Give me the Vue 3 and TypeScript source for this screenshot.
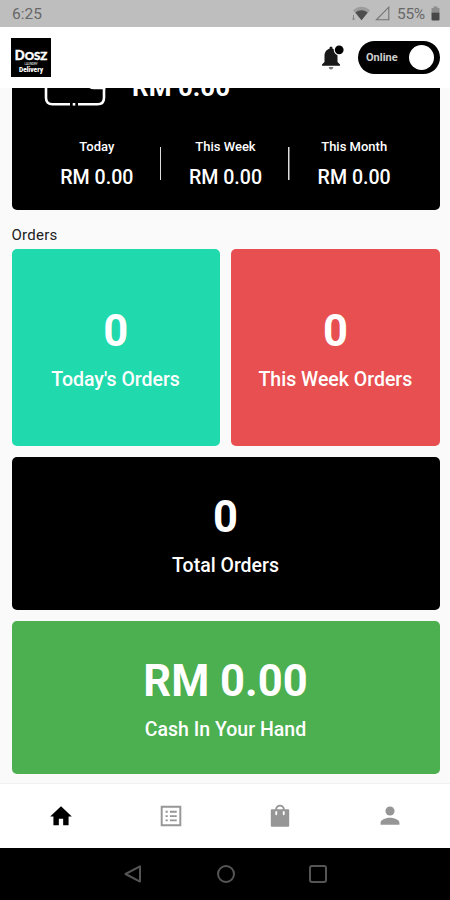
<script setup lang="ts">
interface Period {
  label: string
  amount: string
}

interface OrderCard {
  label: string
  value: string
  tone: string
}

const periods: Period[] = [
  { label: 'Today', amount: 'RM 0.00' },
  { label: 'This Week', amount: 'RM 0.00' },
  { label: 'This Month', amount: 'RM 0.00' },
]

const cards: OrderCard[] = [
  { label: "Today's Orders", value: '0', tone: 'teal' },
  { label: 'This Week Orders', value: '0', tone: 'red' },
  { label: 'Total Orders', value: '0', tone: 'black' },
  { label: 'Cash In Your Hand', value: 'RM 0.00', tone: 'green' },
]
</script>

<template>
  <div class="screen">
    <div class="status">
      <span class="clock">6:25</span>
      <svg class="wifi" width="19" height="15" viewBox="0 0 19 15">
        <path d="M1 4.2Q9.5-2.6 18 4.2L9.5 14.2Z" fill="#9c9c9c" />
        <path d="M3.3 6.6Q9.5 2 15.7 6.6L9.5 14.2Z" fill="#4d4d4d" />
        <path d="M1.5 9v5M.3 12.500l1.200 1.500 1.200-1.500" stroke="#858585" stroke-width="1" fill="none" />
      </svg>
      <svg class="signal" width="15" height="15" viewBox="0 0 15 15">
        <path d="M1.4 13.8H13.8V1.2Z" fill="none" stroke="#747474" stroke-width="1.1" />
      </svg>
      <span class="percent">55%</span>
      <svg class="battery" width="9" height="15" viewBox="0 0 9 15">
        <path d="M2.5 0.5h4v1.5H8.5V6.5H.5V2h2z" fill="#8d8d8d" />
        <path d="M.5 6.5h8v7q0 1-1 1h-6q-1 0-1-1z" fill="#484848" />
      </svg>
    </div>

    <header class="header">
      <div class="logo">
        <span class="logo-name"><b>D</b>OSZ</span>
        <span class="logo-mid">LAUNDRY</span>
        <span class="logo-sub">Delivery</span>
      </div>
      <svg class="bell" width="24" height="26" viewBox="0 0 24 26">
        <path
          d="M1 20.7v-1.2l2.5-2.6V11c0-3.8 2-6.5 5-7.2V3q0-1.6 1.5-1.6T11.500 3v.8c3 .7 5 3.400 5 7.200v5.900l2.500 2.600v1.200z"
          fill="#191919"
        />
        <path d="M7.700 22h4.600q-.4 2.500-2.300 2.500T7.700 22z" fill="#777" />
        <circle cx="18.200" cy="4.800" r="5.500" fill="#fff" />
        <circle cx="18.200" cy="4.800" r="4.400" fill="#000" />
      </svg>
      <div class="toggle">
        <span>Online</span>
        <i class="knob"></i>
      </div>
    </header>

    <main class="content">
      <section class="earnings">
        <div class="balance">
          <svg class="wallet" width="64" height="58" viewBox="0 0 64 58">
            <g fill="none" stroke="#fff" stroke-width="2.600">
              <path d="M27 54.300H9.500Q3 54.300 3 47.800V10Q3 3.500 9.500 3.500H53Q61 3.500 61 11V21" />
              <path d="M35 54.300H54.500Q61 54.300 61 47.800V38" />
              <path d="M62.300 38H51a8 8 0 0 1 0-16h11.300" />
              <path d="M29.700 54.300h2.600" />
            </g>
          </svg>
          <span class="balance-amount">RM 0.00</span>
        </div>
        <div class="periods">
          <div v-for="p in periods" :key="p.label" class="period">
            <span class="period-label">{{ p.label }}</span>
            <span class="period-amount">{{ p.amount }}</span>
          </div>
        </div>
      </section>

      <h2 class="title">Orders</h2>

      <section class="grid">
        <article v-for="c in cards" :key="c.label" class="card" :class="c.tone">
          <strong>{{ c.value }}</strong>
          <span>{{ c.label }}</span>
        </article>
      </section>
    </main>

    <nav class="tabs">
      <span class="tab active">
        <svg width="26" height="26" viewBox="0 0 24 24">
          <path d="M10 20.500v-6h4v6h5v-8h3L12 3 2 12.500h3v8z" fill="currentColor" />
        </svg>
      </span>
      <span class="tab">
        <svg width="26" height="26" viewBox="0 0 24 24">
          <path
            d="M2.500 2.500h19v19h-19zM4.300 4.300v15.400h15.400V4.300zM7 7.200h2v1.700H7zM11 7.200h6.300v1.700H11zM7 11.200h2v1.700H7zM11 11.200h6.300v1.700H11zM7 15.200h2v1.700H7zM11 15.200h6.300v1.700H11z"
            fill="currentColor"
            fill-rule="evenodd"
          />
        </svg>
      </span>
      <span class="tab">
        <svg width="26" height="26" viewBox="0 0 24 24">
          <path
            d="M19.500 5.800h-3C16.200 3.300 14.500 1.600 12 1.600S7.800 3.300 7.500 5.800h-3Q3.500 5.800 3.500 6.800V21Q3.500 22 4.500 22h15q1 0 1-1V6.800q0-1-1-1zM12 3.200q2.300 0 2.700 2.600H9.300Q9.700 3.200 12 3.200zM7.700 7.500h1.700v2.800q0 .9-.85.9t-.85-.9zM14.600 7.500h1.700v2.800q0 .9-.85.9t-.85-.9z"
            fill="currentColor"
            fill-rule="evenodd"
          />
        </svg>
      </span>
      <span class="tab">
        <svg width="26" height="26" viewBox="0 0 24 24">
          <circle cx="12" cy="7.400" r="4.200" fill="currentColor" />
          <path d="M3.300 20v-1.800c0-3 5.600-4.600 8.700-4.600s8.700 1.600 8.700 4.600V20z" fill="currentColor" />
        </svg>
      </span>
    </nav>

    <footer class="system">
      <svg width="20" height="20" viewBox="0 0 20 20">
        <path d="M17 2.400V17.600L2.500 10Z" />
      </svg>
      <svg width="20" height="20" viewBox="0 0 20 20">
        <circle cx="10" cy="10" r="8" />
      </svg>
      <svg width="20" height="20" viewBox="0 0 20 20">
        <rect x="2" y="2" width="16" height="16" rx="2" />
      </svg>
    </footer>
  </div>
</template>

<style>
body {
  margin: 0;
}
</style>

<style scoped>
.screen {
  display: flex;
  flex-direction: column;
  width: 450px;
  height: 900px;
  overflow: hidden;
  background: #fafafa;
  font-family: Roboto, "Liberation Sans", sans-serif;
}
.status {
  display: flex;
  align-items: center;
  flex: none;
  height: 27px;
  padding: 0 10px 0 12px;
  box-sizing: border-box;
  background: #bebebe;
  color: #676767;
  font-size: 15.500px;
}
.clock {
  flex: 1;
}
.wifi {
  margin-right: 4px;
}
.signal {
  margin-right: 7px;
}
.percent {
  width: 28px;
  margin-right: 6px;
  font-size: 15.500px;
  letter-spacing: -0.3px;
}
.header {
  display: flex;
  align-items: center;
  flex: none;
  height: 61px;
  padding: 0 10px 0 11px;
  background: #fff;
}
.logo {
  display: flex;
  flex-direction: column;
  align-items: center;
  width: 40px;
  height: 39px;
  margin-right: auto;
  background: #000;
  color: #fff;
}
.logo-name {
  margin-top: 11px;
  font: 900 11.500px/13px Lato, sans-serif;
  -webkit-text-stroke: 0.4px #fff;
}
.logo-name b {
  font-size: 13px;
  font-weight: 900;
}
.logo-mid {
  height: 4px;
  font-size: 3px;
  line-height: 4px;
}
.logo-sub {
  margin-top: 1px;
  font-size: 6.500px;
  font-weight: 900;
  line-height: 7px;
}
.bell {
  margin-right: 13px;
}
.toggle {
  display: flex;
  align-items: center;
  justify-content: space-between;
  width: 82px;
  height: 33px;
  padding: 0 6px 0 8px;
  box-sizing: border-box;
  border-radius: 17px;
  background: #000;
  color: #d0d0d0;
  font-size: 11px;
  font-weight: 700;
}
.knob {
  width: 25px;
  height: 25px;
  border-radius: 50%;
  background: #fff;
}
.content {
  display: flex;
  flex-direction: column;
  flex: none;
  height: 695px;
  padding: 0 10.5px 0 11.5px;
  box-sizing: border-box;
  overflow: hidden;
}
.earnings {
  flex: none;
  height: 190px;
  margin-top: -68.500px;
  padding: 30.500px 21px 0;
  box-sizing: border-box;
  border-radius: 5px;
  background: #000;
  color: #fff;
}
.balance {
  display: flex;
  align-items: center;
  height: 58px;
  padding-left: 10.500px;
}
.wallet {
  margin-right: 25px;
}
.balance-amount {
  padding-top: 16px;
  font-size: 26px;
  font-weight: 700;
  line-height: 30px;
}
.periods {
  display: grid;
  grid-template-columns: repeat(3, 1fr);
  margin-top: 30.500px;
}
.period {
  display: flex;
  flex-direction: column;
  align-items: center;
  background: linear-gradient(#ddd, #ddd) right 8px / 1.5px 33px no-repeat;
}
.period:last-child {
  background: none;
}
.period-label {
  font-size: 13px;
  font-weight: 500;
  line-height: 16px;
}
.period-amount {
  margin-top: 11px;
  font-size: 19.600px;
  font-weight: 500;
  line-height: 24px;
}
.title {
  margin: 15px 0 0;
  font-size: 15px;
  font-weight: 400;
  line-height: 20px;
  letter-spacing: 0.250px;
  color: #222;
}
.grid {
  display: grid;
  grid-template-columns: 1fr 1fr;
  grid-template-rows: 196.500px 152.500px 152.500px;
  gap: 11.500px;
  margin-top: 4.500px;
}
.card {
  display: flex;
  flex-direction: column;
  align-items: center;
  justify-content: center;
  padding-top: 3px;
  box-sizing: border-box;
  border-radius: 5px;
  color: #fff;
}
.card strong {
  font-size: 43.500px;
  font-weight: 700;
  line-height: 53px;
}
.card span {
  margin-top: 10px;
  font-size: 19.500px;
  font-weight: 500;
  line-height: 24px;
}
.teal {
  background: #20d9ad;
}
.red {
  background: #e84f50;
}
.black {
  grid-column: span 2;
  background: #000;
}
.green {
  grid-column: span 2;
  background: #4caf50;
}
.tabs {
  display: grid;
  grid-template-columns: repeat(4, 1fr);
  align-items: center;
  flex: none;
  height: 65px;
  padding: 0 5px 0 6px;
  box-sizing: border-box;
  border-top: 1px solid #f1f1f1;
  background: #fff;
}
.tab {
  display: flex;
  justify-content: center;
  color: #969696;
}
.tab.active {
  color: #000;
}
.system {
  display: flex;
  align-items: center;
  justify-content: center;
  gap: 72.500px;
  flex: none;
  height: 52px;
  padding-left: 1px;
  background: #000;
}
.system svg {
  fill: none;
  stroke: #555;
  stroke-width: 2;
  stroke-linejoin: round;
}
</style>
